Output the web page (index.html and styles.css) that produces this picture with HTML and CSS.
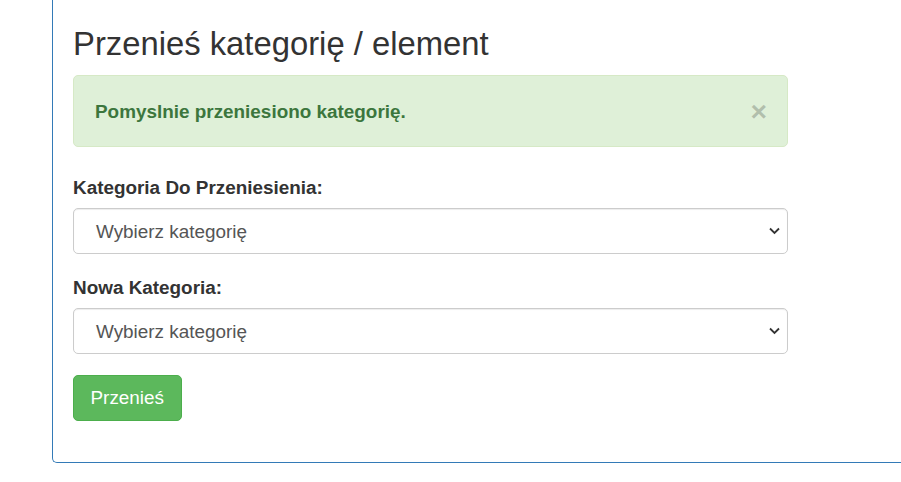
FILE: index.html
```html
<!DOCTYPE html>
<html lang="pl">
<head>
<meta charset="utf-8">
<title>Przenieś kategorię / element</title>
<link rel="stylesheet" href="styles.css">
</head>
<body>
<div class="panel">
  <div class="panel-body">
    <h3 class="title">Przenieś kategorię / element</h3>
    <div class="alert">
      <strong class="alert-text">Pomyslnie przeniesiono kategorię.</strong>
      <span class="close" aria-label="close">×</span>
    </div>
    <form class="form">
      <div class="form-group">
        <label class="label">Kategoria Do Przeniesienia:</label>
        <div class="select">
          <span class="select-text">Wybierz kategorię</span>
          <svg class="chevron" width="11" height="8" viewBox="0 0 11 8"><path d="M1 1.5 L5.5 6 L10 1.5" fill="none" stroke="#333" stroke-width="1.8"/></svg>
        </div>
      </div>
      <div class="form-group">
        <label class="label">Nowa Kategoria:</label>
        <div class="select">
          <span class="select-text">Wybierz kategorię</span>
          <svg class="chevron" width="11" height="8" viewBox="0 0 11 8"><path d="M1 1.5 L5.5 6 L10 1.5" fill="none" stroke="#333" stroke-width="1.8"/></svg>
        </div>
      </div>
      <div class="form-group">
        <button type="button" class="btn">Przenieś</button>
      </div>
    </form>
  </div>
</div>
</body>
</html>
```

FILE: styles.css
```css
html, body {
  margin: 0;
  padding: 0;
  background: #fff;
}
body {
  font-family: "Liberation Sans", Arial, Helvetica, sans-serif;
  font-size: 18.9px;
  line-height: 27px;
  color: #333;
}
.panel {
  margin-left: 52px;
  margin-top: -22px;
  border: 1px solid #337ab7;
  border-right: none;
  border-radius: 5px 0 0 5px;
}
.panel-body {
  padding: 20px;
}
.title {
  margin: 27px 0 13.5px;
  font-size: 32.8px;
  line-height: 35.6px;
  font-weight: 500;
  color: #333;
}
.alert {
  box-sizing: border-box;
  width: 715px;
  display: flex;
  align-items: center;
  justify-content: space-between;
  padding: 21px 20px 21px 21px;
  border: 1px solid #d6e9c6;
  border-radius: 5px;
  background: #dff0d8;
  color: #3c763d;
  margin-bottom: 27px;
}
.alert-text {
  font-weight: bold;
}
.close {
  font-size: 28.35px;
  font-weight: bold;
  line-height: 1;
  color: #000;
  opacity: 0.2;
  text-shadow: 0 1px 0 #fff;
}
.form {
  width: 715px;
}
.form-group {
  margin-bottom: 20.25px;
}
.label {
  display: block;
  font-weight: bold;
  margin-bottom: 6.75px;
}
.select {
  box-sizing: border-box;
  height: 46px;
  display: flex;
  align-items: center;
  justify-content: space-between;
  padding: 0 7px 0 22px;
  border: 1px solid #ccc;
  border-radius: 5px;
  box-shadow: inset 0 1px 1px rgba(0, 0, 0, 0.075);
  color: #555;
  background: #fff;
}
.chevron {
  display: block;
}
.btn {
  box-sizing: border-box;
  height: 46px;
  padding: 0 16.5px;
  font-family: inherit;
  font-size: 18.9px;
  color: #fff;
  background: #5cb85c;
  border: 1px solid #4cae4c;
  border-radius: 5px;
  margin-top: 1px;
}
```
